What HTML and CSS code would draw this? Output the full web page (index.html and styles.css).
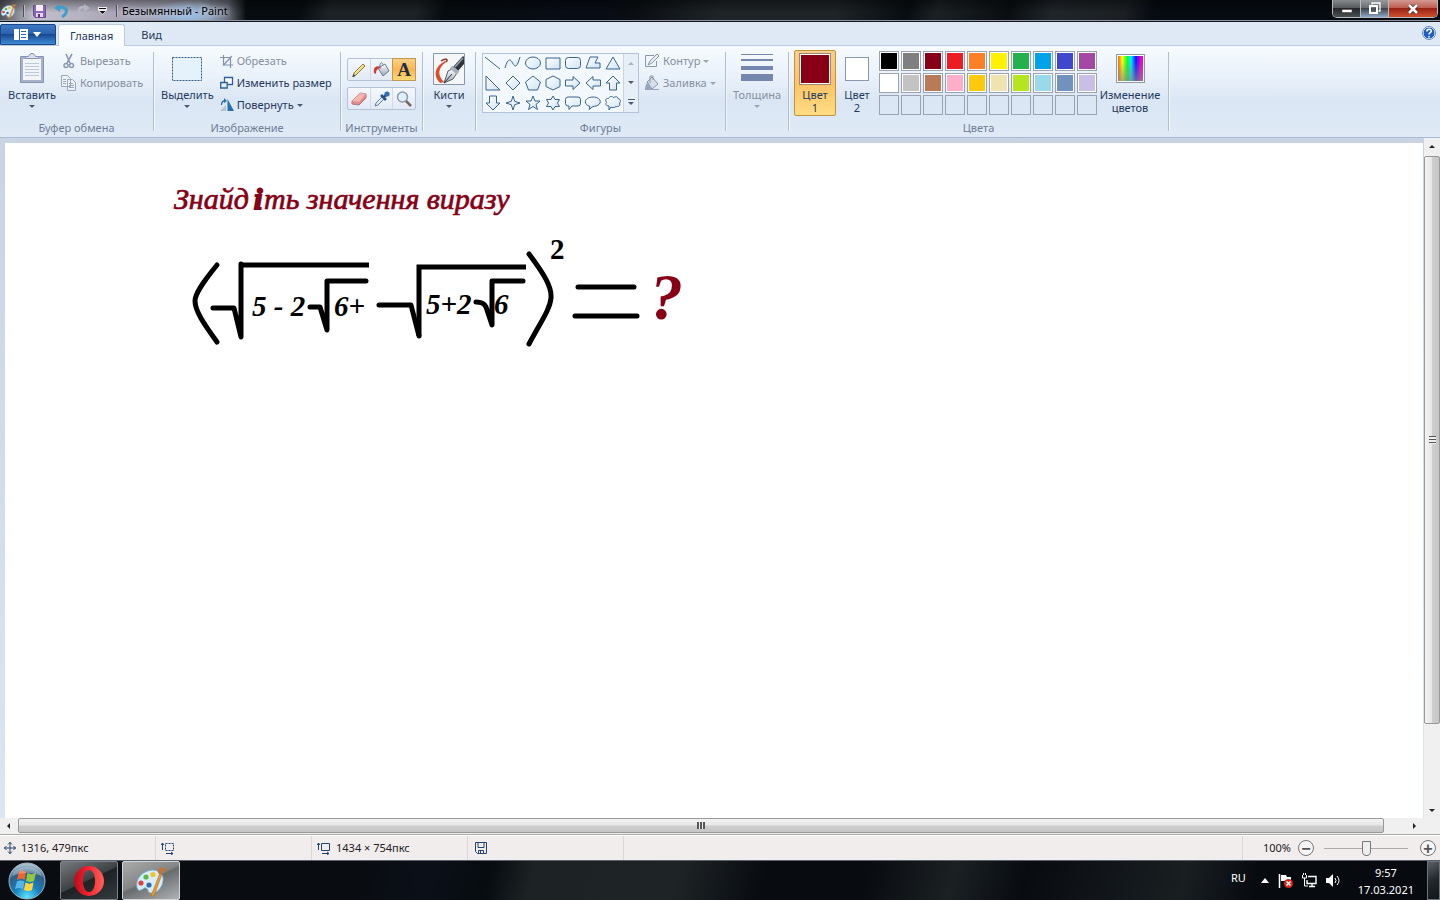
FILE: index.html
```html
<!DOCTYPE html>
<html lang="ru">
<head>
<meta charset="utf-8">
<title>Безымянный - Paint</title>
<link rel="stylesheet" href="styles.css">
</head>
<body>
<svg class="defs" aria-hidden="true">
  <defs>
    <linearGradient id="metal" x2="0" y2="1"><stop stop-color="#fff"/><stop offset="1" stop-color="#9aa3b5"/></linearGradient>
    <linearGradient id="shade" x2="1" y2="1"><stop stop-color="#fff"/><stop offset="1" stop-color="#cfe3f2"/></linearGradient>
    <linearGradient id="red" x2="1"><stop stop-color="#b80d1b"/><stop offset=".45" stop-color="#f3202f"/><stop offset="1" stop-color="#ff6257"/></linearGradient>
    <radialGradient id="orb" cx=".5" cy=".95" r=".9"><stop stop-color="#5ee6ff"/><stop offset=".4" stop-color="#1680bd"/><stop offset=".75" stop-color="#315f86"/><stop offset="1" stop-color="#a9bfce"/></radialGradient>
    <symbol id="palette" viewBox="0 0 34 32">
      <path d="M3 23C1 14 8 6 18 5c8 0 12 5 11 11-1 7-6 13-13 12-3-1-1-4-4-5-2-1-3 2-5 2-2 1-3 0-4-2z" fill="#d9edf9" stroke="#7aaed0"/>
      <circle cx="7" cy="18" r="2.6" fill="#d7443e"/><circle cx="12" cy="12" r="2.6" fill="#5cb947"/><circle cx="19" cy="9.5" r="2.6" fill="#efc22d"/><circle cx="15" cy="20" r="2.6" fill="#2f6fa8"/>
      <path d="M17 31 26 8l2 1-8 22z" fill="#e89a36" stroke="#b06a1c" stroke-width=".6"/><path d="M25 9c-3-3 0-7 2-7 2 2 6 0 5 3-1 4-5 1-4 5z" fill="#b97843"/>
    </symbol>
  </defs>
</svg>
<div class="window">
  <header class="titlebar">
    <svg class="app-icon" width="17" height="18"><use href="#palette"/></svg>
    <span class="title-sep"></span>
    <nav class="quick">
      <button aria-label="Сохранить"><svg width="16" height="16"><path d="M1.500 2.500h12v12H3l-1.500-2z" fill="#8a68b5" stroke="#6a4b96"/><path d="M4 2h7v6H4z" fill="#f5f0fb"/><path d="M4 10h7v4H4z" fill="#e3d8ef"/><path d="M6 11h2v3H6z" fill="#5d358a"/></svg></button>
      <button aria-label="Отменить"><svg width="16" height="16"><path d="M3 5c6-2 11 0 9 5-1 2-2 3-4 4" fill="none" stroke="#3f9fca" stroke-width="3"/><path d="M6 1v8L0 5z" fill="#3f9fca"/></svg></button>
      <button aria-label="Вернуть"><svg width="16" height="16"><path d="M11 5C6 3 2 5 3 9c1 3 2 4 4 5" fill="none" stroke="#b3b5c2" stroke-width="3"/><path d="M8 1v8l6-4z" fill="#b3b5c2"/></svg></button>
      <button aria-label="Настройка панели"><svg width="9" height="8"><path d="M0 0h9v3L4.500 8 0 3z" fill="#eee"/><path d="M1 1.500h7" stroke="#111"/><path d="M1.500 4h6l-3 3z" fill="#111"/></svg></button>
    </nav>
    <span class="title-sep"></span>
    <h1 class="title">Безымянный - Paint</h1>
    <div class="controls">
      <button class="ctl" aria-label="Свернуть"><svg width="12" height="10"><path d="M1 5.500h10v3H1z" fill="#fff" stroke="#444" stroke-width=".6"/></svg></button>
      <button class="ctl ctl-max" aria-label="Восстановить"><svg width="13" height="13"><path d="M4 2.500V1h8v8h-1.500" fill="none" stroke="#fff" stroke-width="1.300"/><path d="M2 4h7v7H2z" fill="none" stroke="#fff" stroke-width="2"/><path d="M4 6h3v3H4z" fill="#555"/></svg></button>
      <button class="ctl ctl-close" aria-label="Закрыть"><svg width="12" height="10"><path d="m2 1 8 8M10 1 2 9" stroke="#4b1d19" stroke-width="4"/><path d="m2 1 8 8M10 1 2 9" stroke="#fff" stroke-width="2.600"/></svg></button>
    </div>
  </header>

  <nav class="tabs">
    <button class="file" aria-label="Меню Paint"><svg width="28" height="12"><path d="M0 0h14v11H0z" fill="#fff"/><path d="M5.500 0v11M7 2.500h5M7 5.500h5M7 8.500h5" stroke="#2a62ae"/><path d="M19 3h8l-4 5z" fill="#fff"/></svg></button>
    <button class="tab tab-on">Главная</button>
    <button class="tab">Вид</button>
    <button class="help" aria-label="Справка"><svg width="14" height="14"><circle cx="7" cy="7" r="6" fill="#1f5fc4" stroke="#fff"/><circle cx="7" cy="7" r="6.500" fill="none" stroke="#6488c0"/><path d="M4.800 5.500c0-3 4.500-3 4.500-.4C9.300 6.800 7 6.600 7 8.500M7 10v1.500" fill="none" stroke="#fff" stroke-width="1.600"/></svg></button>
  </nav>

  <section class="ribbon">
    <div class="group">
      <div class="row">
        <button class="big paste"><svg width="32" height="32"><path d="M4.500 3.500h23v26h-23z" fill="#a6b2ca" stroke="#8793b0"/><path d="M7 6h18v21H7z" fill="#f1f5fa"/><path d="M9 10.500h14M9 13.500h14M9 16.500h14M9 19.500h14M9 22.500h14" stroke="#bcc7da"/><path d="M9.500 5.500v-2h3c1-4 6-4 7 0h3v2z" fill="#dbe1ec" stroke="#8793b0"/></svg><span>Вставить</span><i class="arrow"></i></button>
        <div class="stack">
          <button class="small off"><svg width="16" height="16"><path d="m5 1 4 9M11 1 6 10" stroke="#8b98b3" stroke-width="1.600"/><circle cx="5" cy="12.500" r="2" fill="none" stroke="#8b98b3" stroke-width="1.500"/><circle cx="10.500" cy="12.500" r="2" fill="none" stroke="#8b98b3" stroke-width="1.500"/></svg>Вырезать</button>
          <button class="small off"><svg width="16" height="16"><path d="M.5.500h6l3 3v8h-9zM6.500 4.500h5l3 3v8h-8z" fill="#edf2f8" stroke="#9ba7bd"/><path d="M2 4.500h3M2 6.500h3M2 8.500h3M8 8.500h4M8 10.500h5M8 12.500h5" stroke="#9ba7bd"/></svg>Копировать</button>
        </div>
      </div>
      <h2>Буфер обмена</h2>
    </div>
    <div class="group">
      <div class="row">
        <button class="big select"><svg width="32" height="32"><path d="M1.500 4.500h29v23h-29z" fill="#e5f1fb" stroke="#335c8c" stroke-dasharray="2 1"/></svg><span>Выделить</span><i class="arrow"></i></button>
        <div class="stack">
          <button class="small off"><svg width="14" height="14"><path d="M3.500 1v10H13M0 3.500h10.500V14M3 11.500 12 2" fill="none" stroke="#8592ad" stroke-width="1.200"/></svg>Обрезать</button>
          <button class="small"><svg width="14" height="14"><path d="M4.500 1.500h8v7h-8z" fill="#fff" stroke="#2c6393" stroke-width="1.300"/><path d="M.7 6.500h6.500v5.500H.7z" fill="#e0f0fa" stroke="#2c6393" stroke-width="1.300"/></svg>Изменить размер</button>
          <button class="small"><svg width="14" height="14"><path d="M0 13h6V7z" fill="#b6bfca"/><path d="M7.500 1v12H14z" fill="#2571ae"/><path d="M1.500 7c0-3 1-4 3-4" fill="none" stroke="#2571ae" stroke-width="1.300"/><path d="m4 0 3 3-3 2z" fill="#2571ae"/></svg>Повернуть<i class="arrow"></i></button>
        </div>
      </div>
      <h2>Изображение</h2>
    </div>
    <div class="group">
      <div class="row tools">
        <div class="toolset">
          <button aria-label="Карандаш"><svg width="18" height="18"><path d="m3 16 1-4 9-9 2 2-9 9z" fill="#f2d97a" stroke="#8d7a48"/><path d="m5 12 8-8" stroke="#fff3a4"/><path d="m2 16 2-3 1 2z" fill="#333"/></svg></button>
          <button aria-label="Заливка"><svg width="18" height="18"><path d="m5 7 7-4 4 7-6 5z" fill="url(#metal)" stroke="#6d7f9d"/><path d="M1 12c-1-5 2-8 7-6L5 8c-2 1-2 3-2 5z" fill="#dc3b2c"/><path d="M7 8V3c1-2 3-1 3 1" fill="none" stroke="#6d7f9d"/></svg></button>
          <button class="chosen" aria-label="Текст"><span class="letter">A</span></button>
        </div>
        <div class="toolset">
          <button aria-label="Ластик"><svg width="18" height="18"><path d="m2 11 8-8 6 1v4l-7 7-7-1z" fill="#e5898b" stroke="#ad7980"/><path d="m2 11 8-8 6 1-7 8z" fill="#f6b5b1"/></svg></button>
          <button aria-label="Палитра"><svg width="18" height="18"><path d="m2 16 1-3 7-7 2 2-7 7z" fill="#dceaf6" stroke="#6682a5"/><path d="m8 5 5 5M11 7l3-3" stroke="#26508e" stroke-width="2.500"/><circle cx="14" cy="4" r="2.600" fill="#356db2"/></svg></button>
          <button aria-label="Масштаб"><svg width="18" height="18"><circle cx="7.500" cy="7" r="5" fill="#e0f0fc" stroke="#8b9bb0" stroke-width="1.500"/><path d="m11 11 5 5" stroke="#75675f" stroke-width="2.500"/></svg></button>
        </div>
      </div>
      <h2>Инструменты</h2>
    </div>
    <div class="group">
      <div class="row center">
        <button class="big brush"><svg width="32" height="32"><path d="M.5.500h31v31H.5z" fill="#f5f6f7" stroke="#8997ad"/><path d="M12 8C1 14 0 23 7 30l4-1C4 22 5 15 13 9z" fill="#df4b26"/><path d="M8 8c4-3 8-2 5 1" fill="none" stroke="#8b3929" stroke-width="1.500"/><path d="m11 30 4-12 4-2 5 4-4 6z" fill="url(#metal)" stroke="#59616b"/><path d="m11 30 8-9" stroke="#333"/><path d="m20 14 10-11 1 1v7l-6 7z" fill="#2e3339"/><path d="m22 14 8-9" stroke="#9ba4ae" stroke-width="1.500"/><path d="m18 14 7 6" stroke="#a8b0ba" stroke-width="4"/></svg><span>Кисти</span><i class="arrow"></i></button>
      </div>
    </div>
    <div class="group">
      <div class="row shapes">
        <div class="gallery">
          <div class="shape-grid">
            <button aria-label="Линия"><svg viewBox="0 0 20 20"><path d="m2 4 15 12"/></svg></button>
            <button aria-label="Кривая"><svg viewBox="0 0 20 20"><path d="M2 15C4 7 7 5 9 9s4 6 6 1l2-6"/></svg></button>
            <button aria-label="Овал"><svg viewBox="0 0 20 20"><ellipse cx="10" cy="10" rx="7.500" ry="6"/></svg></button>
            <button aria-label="Прямоугольник"><svg viewBox="0 0 20 20"><path d="M3 5h14v11H3z"/></svg></button>
            <button aria-label="Скругленный прямоугольник"><svg viewBox="0 0 20 20"><rect x="2.500" y="4.500" width="15" height="11" rx="3"/></svg></button>
            <button aria-label="Многоугольник"><svg viewBox="0 0 20 20"><path d="M7 4h8l-3 6h5v5H3z"/></svg></button>
            <button aria-label="Треугольник"><svg viewBox="0 0 20 20"><path d="m10 4 7 12H3z"/></svg></button>
            <button aria-label="Прямоугольный треугольник"><svg viewBox="0 0 20 20"><path d="M3 3v14h14z"/></svg></button>
            <button aria-label="Ромб"><svg viewBox="0 0 20 20"><path d="m10 3 7 7-7 7-7-7z"/></svg></button>
            <button aria-label="Пятиугольник"><svg viewBox="0 0 20 20"><path d="m10 3 7.500 6-3 8h-9l-3-8z"/></svg></button>
            <button aria-label="Шестиугольник"><svg viewBox="0 0 20 20"><path d="m10 3 7 3.500v7L10 17l-7-3.500v-7z"/></svg></button>
            <button aria-label="Стрелка вправо"><svg viewBox="0 0 20 20"><path d="M2.500 7H10V3.500L17 10l-7 6.500V13H2.500z"/></svg></button>
            <button aria-label="Стрелка влево"><svg viewBox="0 0 20 20"><path d="M17.500 7H10V3.500L3 10l7 6.500V13h7.500z"/></svg></button>
            <button aria-label="Стрелка вверх"><svg viewBox="0 0 20 20"><path d="m10 3 7 7h-3.500v7h-7v-7H3z"/></svg></button>
            <button aria-label="Стрелка вниз"><svg viewBox="0 0 20 20"><path d="m10 17 7-7h-3.500V3h-7v7H3z"/></svg></button>
            <button aria-label="Звезда 4"><svg viewBox="0 0 20 20"><path d="m10 3 1.700 5.300L17 10l-5.300 1.700L10 17l-1.700-5.300L3 10l5.300-1.700z"/></svg></button>
            <button aria-label="Звезда 5"><svg viewBox="0 0 20 20"><path d="m10 3 2 5h5l-4 3.500 1.500 5L10 13.500l-4.500 3 1.500-5L3 8h5z"/></svg></button>
            <button aria-label="Звезда 6"><svg viewBox="0 0 20 20"><path d="m10 3 2 3.500h4.500l-2 3.500 2 3.500H12L10 17l-2-3.500H3.500l2-3.500-2-3.500H8z"/></svg></button>
            <button aria-label="Прямоугольная выноска"><svg viewBox="0 0 20 20"><path d="M5 4h10q2.500 0 2.500 2.500v4Q17.500 13 15 13H9l-3 3.500V13H5q-2.500 0-2.500-2.500v-4Q2.500 4 5 4z"/></svg></button>
            <button aria-label="Овальная выноска"><svg viewBox="0 0 20 20"><path d="M7 13.500C-1 11 2 4 10 4s10 7 3 9l-3 .5-4 3z"/></svg></button>
            <button aria-label="Выноска-облако"><svg viewBox="0 0 20 20"><path d="M6 13c-3 0-4-2-2.500-3.500C2 7 3 5 5.500 5.500 7 3 9 3 10.500 4.500 13 3 15 4 15 5.500c3 1 3 3 1.500 4.500C18 13 15 14 13 13.500 11 15 9 15 8 14l-2 3z"/></svg></button>
          </div>
          <div class="gallery-nav">
            <button aria-label="Выше"><i class="arrow up"></i></button>
            <button aria-label="Ниже"><i class="arrow"></i></button>
            <button class="more" aria-label="Все фигуры"><i class="arrow"></i></button>
          </div>
        </div>
        <div class="stack">
          <button class="small off"><svg width="16" height="16"><path d="M10 2.500H1.500v11h11V8" fill="none" stroke="#8b97ac"/><path d="m4 12 2-4 7-7 2 2-7 7z" fill="#e7ecf3" stroke="#8b97ac"/></svg>Контур<i class="arrow"></i></button>
          <button class="small off"><svg width="16" height="16"><path d="m3 7 5-5 6 7-6 5z" fill="#d8deea" stroke="#8b97ac"/><path d="M6 8V1h3v4" fill="none" stroke="#8b97ac"/><path d="M1 14c0-3 1-5 3-7l4 7h7v1H1z" fill="#98a5bd"/></svg>Заливка<i class="arrow"></i></button>
        </div>
      </div>
      <h2>Фигуры</h2>
    </div>
    <div class="group">
      <div class="row center">
        <button class="big off"><svg width="32" height="32"><path d="M0 1.500h32" stroke="#7687ad"/><path d="M0 7h32" stroke="#7687ad" stroke-width="2"/><path d="M0 15h32" stroke="#7687ad" stroke-width="4"/><path d="M0 24.500h32" stroke="#7687ad" stroke-width="7"/></svg><span>Толщина</span><i class="arrow"></i></button>
      </div>
    </div>
    <div class="group">
      <div class="row colors">
        <button class="color color-on"><span class="well well-red"></span><span>Цвет<br>1</span></button>
        <button class="color"><span class="well well-white"></span><span>Цвет<br>2</span></button>
        <div class="swatches">
          <button aria-label="Черный" style="background-color:#000"></button><button aria-label="Серый" style="background-color:#7f7f7f"></button><button aria-label="Темно-красный" style="background-color:#880015"></button><button aria-label="Красный" style="background-color:#ed1c24"></button><button aria-label="Оранжевый" style="background-color:#ff7f27"></button><button aria-label="Желтый" style="background-color:#fff200"></button><button aria-label="Зеленый" style="background-color:#22b14c"></button><button aria-label="Голубой" style="background-color:#00a2e8"></button><button aria-label="Индиго" style="background-color:#3f48cc"></button><button aria-label="Лиловый" style="background-color:#a349a4"></button>
          <button aria-label="Белый" style="background-color:#fff"></button><button aria-label="Светло-серый" style="background-color:#c3c3c3"></button><button aria-label="Коричневый" style="background-color:#b97a57"></button><button aria-label="Розовый" style="background-color:#ffaec9"></button><button aria-label="Золотой" style="background-color:#ffc90e"></button><button aria-label="Бежевый" style="background-color:#efe4b0"></button><button aria-label="Травяной" style="background-color:#b5e61d"></button><button aria-label="Бирюзовый" style="background-color:#99d9ea"></button><button aria-label="Сизый" style="background-color:#7092be"></button><button aria-label="Сиреневый" style="background-color:#c8bfe7"></button>
          <button class="empty" aria-label="Пусто 1"></button><button class="empty" aria-label="Пусто 2"></button><button class="empty" aria-label="Пусто 3"></button><button class="empty" aria-label="Пусто 4"></button><button class="empty" aria-label="Пусто 5"></button><button class="empty" aria-label="Пусто 6"></button><button class="empty" aria-label="Пусто 7"></button><button class="empty" aria-label="Пусто 8"></button><button class="empty" aria-label="Пусто 9"></button><button class="empty" aria-label="Пусто 10"></button>
        </div>
        <button class="color edit"><span class="spectrum"></span><span>Изменение<br>цветов</span></button>
      </div>
      <h2>Цвета</h2>
    </div>
  </section>

  <main class="workspace">
    <div class="paper">
      <svg class="drawing" width="760" height="260" viewBox="0 0 760 260">
        <text class="task" x="169" y="66">Знайд</text><text class="task heavy" x="249" y="66">і</text><text class="task" x="259" y="66">ть значення виразу</text>
        <g class="ink">
          <path d="M212 122C199 138 190 150 190 158c0 10 9 23 22 41"/>
          <path d="M208 165h21l7 29V121"/><path d="M236 122h128" class="flat"/>
          <path d="M305 164h10l7 23V138h39"/>
          <path d="M374 162h32l8 31"/><path d="M414 193V124h107" class="flat"/>
          <path d="M471 159q8 0 10 5l6 18V138h31"/>
          <path d="M524 111c15 20 23 33 22 44s-9 22-22 46"/>
          <path d="M573 144h56M570 173h62"/>
        </g>
        <g class="digits">
          <text x="247" y="173">5 - 2</text><text x="329" y="173">6+</text>
          <text x="421" y="171">5+2</text><text x="489" y="171">6</text>
          <text class="power" x="545" y="116">2</text>
        </g>
        <text class="question" x="645" y="176">?</text>
      </svg>
    </div>
    <div class="vscroll">
      <button aria-label="Прокрутить вверх"><i class="tri tri-up"></i></button>
      <div class="vtrack"><div class="vthumb"><i></i></div></div>
      <button aria-label="Прокрутить вниз"><i class="tri tri-down"></i></button>
    </div>
  </main>

  <div class="hscroll">
    <button aria-label="Прокрутить влево"><i class="tri tri-left"></i></button>
    <div class="htrack"><div class="hthumb"><i></i></div></div>
    <button aria-label="Прокрутить вправо"><i class="tri tri-right"></i></button>
  </div>

  <footer class="status">
    <div class="cell"><svg width="12" height="12"><path d="M6 0v12M0 6h12M4 2.500l2-2 2 2M4 9.500l2 2 2-2M2.500 4l-2 2 2 2M9.500 4l2 2-2 2" fill="none" stroke="#24436e"/></svg>1316, 479пкс</div>
    <div class="cell"><svg width="14" height="13"><path d="M1.500 1v7M0 3l1.500-2L3 3M5 11.500h7M10 10l2 1.500-2 1.500" fill="none" stroke="#24436e"/><path d="M4.500 1.500h8v7h-8z" fill="none" stroke="#24436e" stroke-dasharray="2 1"/></svg></div>
    <div class="cell"><svg width="14" height="13"><path d="M1.500 1v7M0 3l1.500-2L3 3M5 11.500h7M10 10l2 1.500-2 1.500M4.500 1.500h8v7h-8z" fill="none" stroke="#24436e"/></svg>1434 × 754пкс</div>
    <div class="cell"><svg width="12" height="12"><path d="M.5.500h11v11h-9l-2-2zM3 .5v5h6v-5M3.500 11.500v-3h5v3M5.500 9v2" fill="none" stroke="#24436e"/></svg></div>
    <div class="zoom">
      <label for="zoom">100%</label>
      <button aria-label="Уменьшить">−</button>
      <input id="zoom" type="range" min="0" max="100" value="50">
      <button aria-label="Увеличить">+</button>
    </div>
  </footer>

  <div class="taskbar">
    <button class="start" aria-label="Пуск"><svg width="38" height="38"><circle cx="19" cy="19" r="18" fill="url(#orb)" stroke="#9fb5c5"/><path d="M11 10c3-2 5-1 7 0l-1.500 8c-3-2-5-1-7.500 0z" fill="#ef6430"/><path d="M19.500 11c3 1.500 5 1.500 8.500 0l-2 8c-3 1.500-5 1-8 0z" fill="#8fc73f"/><path d="M9 19.500c3-1.500 5-1 7.500 0L15 27c-3-1.500-5-1.500-8 0z" fill="#59b5ee"/><path d="M17.500 20.500c3 1.500 5 1.500 8 0L24 28c-3 1.500-5 1-8 0z" fill="#ffd43c"/><path d="M4 14C8 2 30 2 34 14c-9-4-21-4-30 0z" fill="#fff" opacity=".25"/></svg></button>
    <button class="task-btn" aria-label="Opera"><svg width="32" height="32"><path fill-rule="evenodd" d="M16 1a15 15 0 1 0 0 30 15 15 0 1 0 0-30zm0 4c4 0 6 5 6 11s-2 11-6 11-6-5-6-11 2-11 6-11z" fill="url(#red)"/></svg></button>
    <button class="task-btn task-on" aria-label="Paint"><svg width="34" height="32"><use href="#palette"/></svg></button>
    <div class="tray">
      <span class="lang">RU</span>
      <button aria-label="Скрытые значки"><svg width="8" height="5"><path d="m0 5 4-5 4 5z" fill="#fff"/></svg></button>
      <svg width="15" height="15"><path d="M1.500 1v14" stroke="#fff" stroke-width="1.500"/><path d="M3 2h5l1 2h4v6H8L7 8H3z" fill="#fff"/><circle cx="10.500" cy="10.500" r="4.500" fill="#d9261c"/><path d="m8.500 8.500 4 4m0-4-4 4" stroke="#fff" stroke-width="1.400"/></svg>
      <svg width="15" height="15"><path d="M6 3.500h8v7H5V7M7 13.500h6M10 11v2" fill="none" stroke="#fff" stroke-width="1.400"/><path d="M.5 2v3h4V2M1.500 0v2M3.500 0v2M2.500 5v8H6" fill="none" stroke="#fff"/></svg>
      <svg width="15" height="15"><path d="M0 5h3l4-4v13l-4-4H0z" fill="#fff"/><path d="M9 5q2 2.500 0 5M11 3q4 4.500 0 9" fill="none" stroke="#fff"/></svg>
      <div class="clock">9:57<br>17.03.2021</div>
    </div>
    <button class="desktop" aria-label="Свернуть все окна"></button>
  </div>
</div>
</body>
</html>
```

FILE: styles.css
```css
* { box-sizing: border-box; }
body { margin: 0; font: 12px/14px "Noto Sans", "Open Sans", sans-serif; color: #1e395b; }
button { font: inherit; color: inherit; background: none; border: 0; padding: 0; margin: 0; }
svg { display: block; flex: none; }
h1, h2 { margin: 0; font: inherit; }
.defs { position: absolute; width: 0; height: 0; }
.window { display: flex; flex-direction: column; height: 100vh; overflow: hidden; font-size: 11px; background: #dfe8f4; }

.titlebar {
  display: flex; align-items: center; height: 22px; flex: none; gap: 6px;
  border-bottom: 1px solid #10151c; box-shadow: inset 0 -1px #8d94a0;
  background:
    radial-gradient(ellipse 40px 14px at 188px 15px, #94bde8 0, transparent 100%),
    linear-gradient(#0006, transparent 60%),
    linear-gradient(90deg, #50535b 0, #c3c1cc 34px, #aaa4b6 120px, #9aa0af 200px, #656a75 228px, transparent 246px),
    linear-gradient(105deg, #070c10 21%, #1d2226 23%, #1d2226 29%, #070c10 31%, #080c16 42%, #0a0e12 44%, #1f2427 50%, #1f2427 58%, #080d11 63%, #1c2124 65%, #0a0e11 70%, #20252a 73%, #1c2023 78%, #070b12 80%);
}
.title-sep { width: 1px; height: 12px; background: #4b4f5a; box-shadow: 1px 0 #b8bac5; }
.quick { display: flex; align-items: center; gap: 6px; padding: 0 3px 0 2px; }
.title { color: #000; margin-left: -1px; text-shadow: 0 0 4px #d0d6e4, 0 0 6px #c0c7d9; white-space: nowrap; }
.controls { display: flex; align-self: flex-start; margin: 0 2px 0 auto; border: 1px solid #b8bbbe; border-top: 0; border-radius: 0 0 5px 5px; overflow: hidden; }
.ctl { display: grid; place-items: center; width: 28px; height: 17px; background: linear-gradient(#84888b, #55595c 48%, #24282a 50%, #4b5052); border-right: 1px solid #b8bbbe; }
.ctl-max { background: linear-gradient(#969a9d, #676c70 48%, #3d444b 50%, #8ba8c5); }
.ctl-close { width: 48px; border: 0; background: linear-gradient(#d29a92, #bd5b4d 48%, #992312 50%, #cf5230); }

.tabs { display: flex; align-items: stretch; height: 24px; flex: none; padding-top: 2px; background: #dfe8f5; border-bottom: 1px solid #bccbdd; }
.file { display: grid; place-items: center; width: 56px; margin-right: 2px; border: 1px solid #1b4687; border-radius: 2px 2px 0 0; background: linear-gradient(#3f78c3, #2b61ac 48%, #174990 50%, #3f8ad6); }
.tab { padding: 0 16px; }
.tab-on { padding: 0 11px; margin-bottom: -1px; background: #fafdff; border: 1px solid #bccbdd; border-bottom: 0; border-radius: 3px 3px 0 0; }
.help { margin: 0 4px 4px auto; }

.ribbon {
  display: grid; grid-template-columns: 154px 187px 82px 53px 250px 63px 380px;
  height: 92px; flex: none; padding: 4px 0 1px;
  background: linear-gradient(#f7fbff, #e9f1fa 35%, #dae6f4 60%, #e0eaf7); border-bottom: 1px solid #a9bbd1;
}
.group { display: flex; flex-direction: column; border-right: 1px solid #aebfd3; box-shadow: 1px 0 #f4f8fc; margin: 2px 0 8px; min-width: 0; }
.group h2 { text-align: center; color: #6e7e96; margin: 5px 0 -4px; }
.row { display: flex; height: 64px; }
.center { justify-content: center; }
.big { display: flex; flex-direction: column; align-items: center; padding-top: 1px; gap: 3px; }
.paste { margin-left: 8px; }
.select { margin-left: 7px; }
.stack { display: flex; flex-direction: column; margin: -2px 0 0 5px; }
.select + .stack { margin-left: 6px; }
.small { display: flex; align-items: center; gap: 3px; height: 22px; white-space: nowrap; }
.off { color: #86909f; }
.arrow { display: block; width: 0; height: 0; border: 3px solid transparent; border-top-color: #4a5a72; border-bottom: 0; }
.off .arrow { border-top-color: #9aa4b2; }
.arrow.up { border: 3px solid transparent; border-bottom-color: #a7b1bf; border-top: 0; }

.tools { flex-direction: column; gap: 6px; padding: 6px 6px 0; }
.toolset { display: flex; height: 23px; border: 1px solid #b5c2d5; border-radius: 2px; background: linear-gradient(#f4f8fc, #e2eaf5); }
.toolset button { display: grid; place-items: center; flex: 1; border-right: 1px solid #d1dbe8; }
.toolset button:last-child { border-right: 0; }
.toolset .chosen { background: linear-gradient(#fbd08a, #fcb64d 50%, #ffd878); box-shadow: 0 0 0 1px #c29a4f; }
.letter { font: bold 19px/20px "Liberation Serif", serif; color: #1e2f48; }

.shapes { padding-left: 6px; }
.gallery { display: flex; height: 60px; margin-top: 1px; border: 1px solid #b3c3d9; background: #f2f8fd; }
.shape-grid { display: grid; grid-template-columns: repeat(7, 20px); grid-template-rows: repeat(3, 20px); margin-top: -1px; }
.shape-grid svg { width: 20px; height: 20px; fill: url(#shade); stroke: #39658f; stroke-width: 1; }
.gallery-nav { display: grid; grid-template-rows: repeat(3, 1fr); width: 15px; border-left: 1px solid #c7d5e6; background: #e6eef8; }
.gallery-nav button { display: grid; place-items: center; }
.gallery-nav .more { align-content: center; gap: 2px; }
.more::before { content: ""; width: 7px; height: 1px; background: #4a5a72; }

.colors { height: 66px; margin: -2px 0 0; padding-left: 5px; }
.color { display: flex; flex-direction: column; align-items: center; justify-content: space-between; width: 42px; height: 66px; padding: 2px 0 1px; line-height: 13px; border: 1px solid transparent; border-radius: 2px; }
.color-on { background: linear-gradient(#f7cf92, #fbc367 50%, #ffdc83); border-color: #c29438; }
.well { width: 32px; height: 32px; border: 1px solid #9f8b6a; box-shadow: inset 0 0 0 1px #fff; }
.well-red { background: #880015; }
.well-white { width: 24px; height: 24px; margin: 4px 0; background: #fff; border-color: #8a97ad; }
.swatches { display: grid; grid-template-columns: repeat(10, 20px); grid-template-rows: repeat(3, 20px); gap: 2px; margin: 1px 0 0 1px; }
.swatches button { border: 1px solid #9ba2b0; box-shadow: inset 0 0 0 1px #fff; }
.swatches .empty { box-shadow: none; }
.edit { width: 66px; }
.spectrum { width: 29px; height: 29px; margin-top: 1px; border: 1px solid #8f98a5; box-shadow: inset 0 0 0 1px #fff; background: linear-gradient(transparent, #8088), linear-gradient(90deg, #f33, #ff0 20%, #0f3 38%, #0ef 52%, #11f 70%, #f0c 90%, #f04); background: linear-gradient(#8880 20%, #888b), linear-gradient(90deg, #f33, #ff0 20%, #0f3 38%, #0ef 52%, #11f 70%, #f0c 90%, #f04); }

.workspace { display: flex; flex: 1; min-height: 0; background: linear-gradient(#c8d3e4, #dbe6f3); }
.paper { flex: 1; margin: 5px 1px 0 5px; background: #fff; overflow: hidden; }
.ink { fill: none; stroke: #000; stroke-width: 5; stroke-linecap: round; stroke-linejoin: round; }
.flat { stroke-linecap: butt; stroke-linejoin: miter; }
.task { font: italic 30px "Liberation Serif", serif; fill: #880015; stroke: #880015; stroke-width: 0.7px; }
.heavy { font-weight: bold; stroke-width: 2px; }
.digits { font: italic bold 29px "Liberation Serif", serif; }
.power { font-style: normal; }
.question { font: italic bold 66px "Liberation Serif", serif; fill: #880015; }

.vscroll { display: flex; flex-direction: column; width: 16px; background: #f0f0f0; }
.vscroll button, .hscroll button { display: grid; place-items: center; flex: none; width: 16px; height: 16px; }
.vtrack { flex: 1; padding-top: 2px; }
.vthumb { height: 88%; border: 1px solid #999; border-radius: 2px; background: linear-gradient(90deg, #f3f3f3, #e6e6e6 48%, #cfcfcf 52%, #c5c5c5); display: grid; place-items: center; }
.vthumb i { width: 7px; height: 8px; background: repeating-linear-gradient(#555 0 1px, #eee 1px 3px); }
.hscroll { display: flex; height: 17px; flex: none; padding-right: 18px; background: #f0f0f0; border-bottom: 1px solid #aaa; }
.htrack { flex: 1; padding: 0 22px 1px 2px; }
.hthumb { height: 15px; border: 1px solid #999; border-radius: 2px; background: linear-gradient(#f3f3f3, #e6e6e6 48%, #cfcfcf 52%, #c5c5c5); display: grid; place-items: center; }
.hthumb i { width: 8px; height: 7px; background: repeating-linear-gradient(90deg, #555 0 2px, #eee 2px 3px); }
.tri { width: 0; height: 0; border: 3px solid transparent; }
.tri-up { border-bottom-color: #222; border-top: 0; }
.tri-down { border-top-color: #222; border-bottom: 0; }
.tri-left { border-right-color: #222; border-left: 0; }
.tri-right { border-left-color: #222; border-right: 0; }

.status { display: flex; height: 25px; flex: none; background: #f1edec; color: #222; border-top: 1px solid #fff; }
.cell { display: flex; align-items: center; gap: 5px; width: 156px; padding-left: 4px; border-right: 1px solid #dad7d7; }
.cell + .cell { padding-left: 5px; }
.cell:nth-child(4) { padding-left: 7px; }
.zoom { display: flex; align-items: center; margin-left: auto; padding: 0 4px 0 20px; border-left: 1px solid #dad7d7; }
.zoom button { width: 16px; height: 16px; border: 1px solid #777; border-radius: 50%; font: bold 16px/13px "Liberation Sans", sans-serif; color: #555; background: #f5f5f5; }
.zoom label { margin-right: 7px; }
.zoom input { appearance: none; width: 84px; height: 16px; margin: 0 12px 0 10px; background: linear-gradient(#aaa, #aaa) center / 100% 1px no-repeat; }
.zoom input::-webkit-slider-thumb { appearance: none; width: 9px; height: 15px; border: 1px solid #777; border-radius: 1px 1px 5px 5px; background: #eee; }

.taskbar { display: flex; align-items: stretch; height: 40px; flex: none; border-top: 1px solid #59636e; color: #fff; background: linear-gradient(105deg, #090d12 25%, #0b0f18 30%, #070c10 34%, #1d2225 37%, #1e2326 47%, #080c10 53%, #080c10 60%, #1b2023 66%, #080c11 71%, #191e21 82%, #070b10 87%); }
.start { display: grid; place-items: center; width: 38px; margin: 0 14px 0 8px; }
.task-btn { display: grid; place-items: center; width: 58px; margin-right: 4px; border: 1px solid #7d8286; border-radius: 2px; background: linear-gradient(155deg, #777b7d, #3c4143 48%, #1d2224 50%, #343b3e); }
.task-on { border-color: #d3d6d8; background: linear-gradient(155deg, #aaa, #858787 45%, #696c6d 50%, #b0b2b3); }
.tray { display: flex; align-items: center; margin-left: auto; gap: 9px; }
.lang { margin: -6px 6px 0 0; }
.clock { text-align: center; line-height: 17px; margin: 0 4px 0 8px; }
.desktop { width: 13px; margin-left: 9px; border: 1px solid #6d747b; background: linear-gradient(150deg, #596067, #22272b 50%, #111619); }
```
